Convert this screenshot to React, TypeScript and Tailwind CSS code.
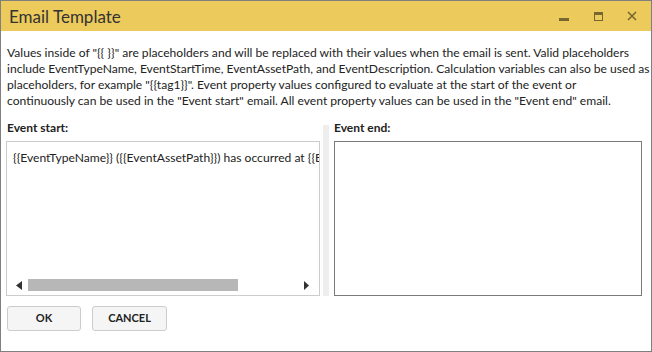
import React from "react";

const lines = [
  'Values inside of "{{ }}" are placeholders and will be replaced with their values when the email is sent. Valid placeholders',
  "include EventTypeName, EventStartTime, EventAssetPath, and EventDescription. Calculation variables can also be used as",
  'placeholders, for example "{{tag1}}". Event property values configured to evaluate at the start of the event or',
  'continuously can be used in the "Event start" email. All event property values can be used in the "Event end" email.',
];

const font = { fontFamily: 'Lato, "Noto Sans", sans-serif' };

export default function App() {
  return (
    <div
      className="w-[652px] h-[352px] border border-[#7f7f7f] bg-white flex flex-col text-[#222] overflow-hidden"
      style={font}
    >
      {/* Title bar */}
      <div className="h-[30px] bg-[#ecca5b] flex items-center pl-[8px] shrink-0">
        <span className="text-[17px] text-[#333] leading-none">Email Template</span>
        <div className="ml-auto flex items-center h-full">
          <div className="w-[34px] h-full flex items-center justify-center">
            <div className="w-[10px] h-[3px] bg-[#75672f] mt-[6px]" />
          </div>
          <div className="w-[34px] h-full flex items-center justify-center">
            <div className="w-[9px] h-[9px] border border-[#75672f] border-t-[3px]" />
          </div>
          <div className="w-[34px] h-full flex items-center justify-center mr-[2px]">
            <svg width="10" height="10" viewBox="0 0 10 10">
              <path d="M1 1 L9 9 M9 1 L1 9" stroke="#75672f" strokeWidth="1.6" />
            </svg>
          </div>
        </div>
      </div>

      {/* Body */}
      <div className="flex-1 flex flex-col px-[5px] pt-[14px]">
        <div className="text-[12.1px] leading-[16px] pl-[1px]">
          {lines.map((l, i) => (
            <div key={i} className="whitespace-nowrap">
              {l}
            </div>
          ))}
        </div>

        <div className="flex mt-[11px] h-[176px]">
          {/* Event start */}
          <div className="w-[314px] flex flex-col">
            <div className="text-[12px] leading-[16px] font-bold pl-[1px]">Event start:</div>
            <div className="mt-[5px] h-[155px] border border-[#cccccc] flex flex-col overflow-hidden">
              <div className="flex-1 px-[6px] pt-[8px] text-[12.1px] leading-[16px] whitespace-nowrap overflow-hidden">
                {"{{EventTypeName}} ({{EventAssetPath}}) has occurred at {{EventStartTime}}"}
              </div>
              <div className="h-[14px] mb-[3px] flex items-center px-[9px]">
                <svg width="6" height="9" viewBox="0 0 6 9">
                  <path d="M6 0 L0 4.5 L6 9 Z" fill="#333" />
                </svg>
                <div className="ml-[6px] w-[210px] h-[12px] bg-[#b7b7b7]" />
                <svg width="5" height="9" viewBox="0 0 5 9" className="ml-auto mr-[1px]">
                  <path d="M0 0 L5 4.5 L0 9 Z" fill="#333" />
                </svg>
              </div>
            </div>
          </div>

          {/* Splitter */}
          <div className="w-[6px] ml-[3px] mt-[5px] h-[171px] bg-[#eeeeee]" />

          {/* Event end */}
          <div className="flex-1 flex flex-col ml-[5px] mr-[4px]">
            <div className="text-[12px] leading-[16px] font-bold">Event end:</div>
            <div className="mt-[5px] h-[155px] border border-[#7a7a7a]" />
          </div>
        </div>

        {/* Buttons */}
        <div className="flex gap-[11px] mt-[10px] ml-[1px]">
          <button className="w-[74px] h-[25px] bg-[#f5f5f5] border border-[#cccccc] rounded-[3px] text-[11px] font-bold text-[#222]">
            OK
          </button>
          <button className="w-[75px] h-[25px] bg-[#f5f5f5] border border-[#cccccc] rounded-[3px] text-[11px] font-bold text-[#222]">
            CANCEL
          </button>
        </div>
      </div>
    </div>
  );
}
